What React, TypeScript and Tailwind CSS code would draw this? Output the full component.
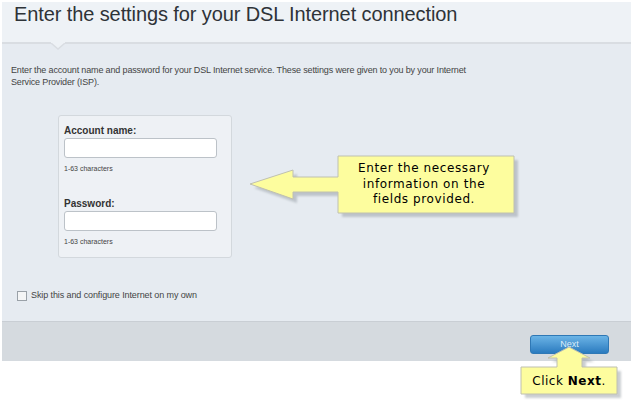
import React from 'react';

function Callouts() {
  const one =
    'M338,156 L514,156 L514,213 L338,213 L338,192 L293,192 L293,199 L250,184 L293,170 L293,177 L338,177 Z';
  const two =
    'M521,367 L557,367 L557,358 L548,358 L569,347 L590,358 L582,358 L582,367 L617,367 L617,394 L521,394 Z';
  return (
    <>
      <svg
        className="absolute inset-0 pointer-events-none"
        width={634}
        height={406}
        viewBox="0 0 634 406"
      >
        <defs>
          <filter id="soft" x="-10%" y="-10%" width="120%" height="130%">
            <feGaussianBlur stdDeviation="1.2" />
          </filter>
        </defs>
        <path d={one} transform="translate(4,4)" fill="#8d949b" opacity="0.45" filter="url(#soft)" />
        <path d={one} fill="#fdfd9e" stroke="#bfc0b0" strokeWidth="1" />
        <path d={two} transform="translate(4,4)" fill="#8d949b" opacity="0.45" filter="url(#soft)" />
        <path d={two} fill="#fdfd9e" stroke="#bfc0b0" strokeWidth="1" />
      </svg>
      <div className="absolute left-[336px] top-[156px] w-[176px] h-[57px] flex items-center justify-center text-center font-['DejaVu_Sans',sans-serif] text-[12px] leading-[15.5px] tracking-[0.6px] text-black">
        Enter the necessary
        <br />
        information on the
        <br />
        fields provided.
      </div>
      <div className="absolute left-[521px] top-[367px] w-[96px] h-[27px] flex items-center justify-center font-['DejaVu_Sans',sans-serif] text-[12px] tracking-[0.5px] text-black">
        Click&nbsp;<span className="font-bold">Next</span>.
      </div>
    </>
  );
}

function Field({ label }: { label: string }) {
  return (
    <div className="flex flex-col">
      <div className="text-[10px] font-bold text-[#333] leading-[12px]">{label}</div>
      <div className="mt-[1px] w-[153px] h-[20px] bg-white border border-[#bcc2c8] rounded-[3px]" />
      <div className="mt-[6px] text-[7px] text-[#444] leading-[9px]">1-63 characters</div>
    </div>
  );
}

export default function App() {
  return (
    <div className="relative w-[634px] h-[406px] bg-white font-['Liberation_Sans',Arial,sans-serif] overflow-hidden">
      <div className="ml-[2px] mt-[2px] w-[629px] flex flex-col">
        <div className="relative h-[42px] bg-[#eef2f6] border-b-2 border-[#d9dde2] pl-[12px]">
          <h1 className="text-[20px] leading-[24px] text-[#2e3338] tracking-[-0.1px]">
            Enter the settings for your DSL Internet connection
          </h1>
          <svg className="absolute left-[49px] top-[40px]" width={14} height={8} viewBox="0 0 14 8">
            <path d="M0,1 L7,7 L14,1" fill="#eef2f6" stroke="#d9dde2" strokeWidth="1.5" />
            <rect x="0" y="0" width="14" height="1" fill="#eef2f6" />
          </svg>
        </div>
        <div className="h-[277px] bg-[#e6ebf1] pl-[9px] pt-[20px] flex flex-col">
          <p className="text-[9px] leading-[12px] text-[#444] w-[475px] tracking-[-0.15px]">
            Enter the account name and password for your DSL Internet service. These settings were given to you by your Internet Service Provider (ISP).
          </p>
          <div className="mt-[27px] ml-[47px] w-[174px] h-[143px] bg-[#eef1f5] border border-[#d3d8dd] rounded-[3px] pl-[5px] pt-[9px] flex flex-col gap-[25px]">
            <Field label="Account name:" />
            <Field label="Password:" />
          </div>
          <div className="mt-[31px] ml-[6px] flex items-center gap-[4px]">
            <div className="w-[10px] h-[10px] bg-[#f4f5f6] border border-[#9aa1a8]" />
            <span className="text-[9px] text-[#444] tracking-[-0.1px]">Skip this and configure Internet on my own</span>
          </div>
        </div>
        <div className="h-[40px] bg-[#d5dadf] border-t border-[#c9ced4] flex items-start justify-end pr-[22px] pt-[13px]">
          <div className="w-[79px] h-[19px] rounded-[3px] bg-gradient-to-b from-[#6bb4e6] to-[#2a7bbf] border border-[#2f78b5] flex items-center justify-center text-[9px] text-[#dcecf8]">
            Next
          </div>
        </div>
      </div>
      <Callouts />
    </div>
  );
}
